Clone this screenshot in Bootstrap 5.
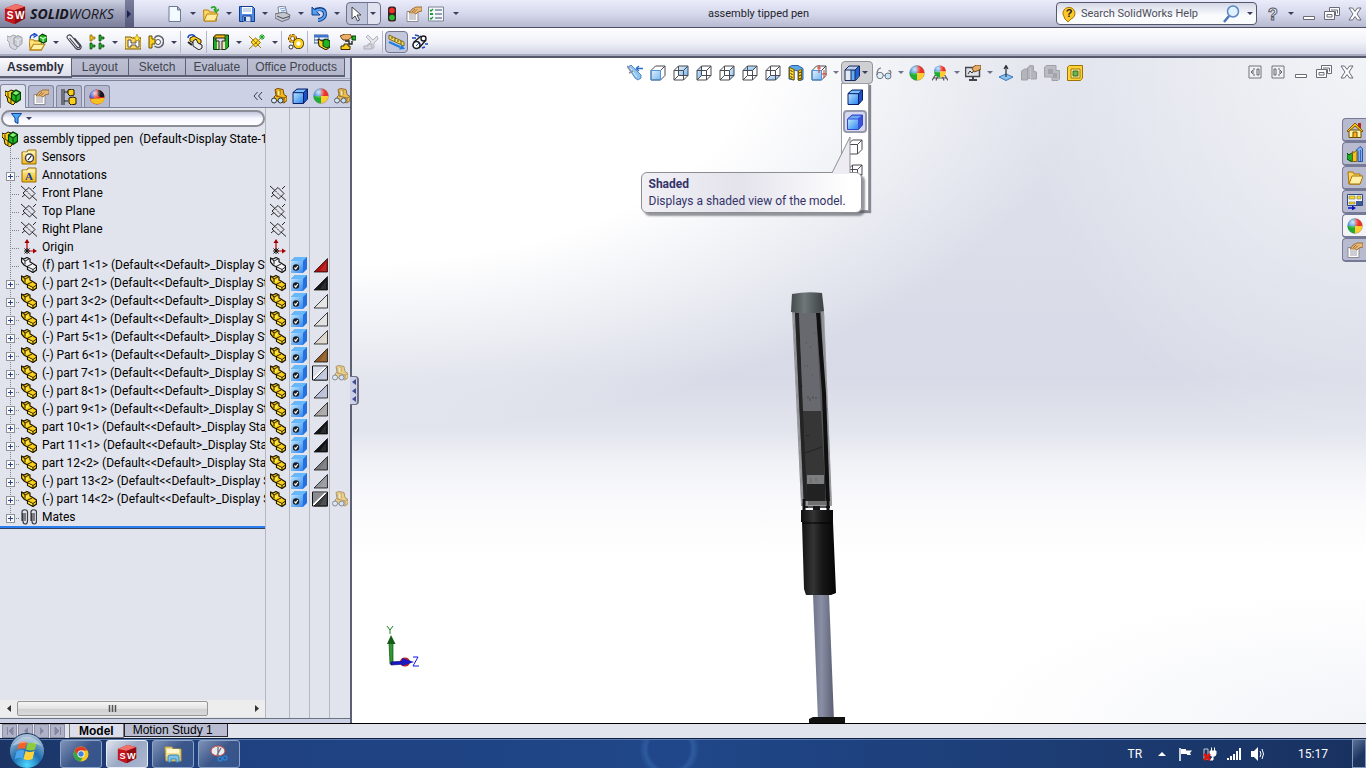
<!DOCTYPE html>
<html lang="en">
<head>
<meta charset="utf-8">
<meta name="viewport" content="width=device-width, initial-scale=1">
<title>SolidWorks - assembly tipped pen</title>
<link href="https://cdn.jsdelivr.net/npm/bootstrap@5.3.0/dist/css/bootstrap.min.css" rel="stylesheet">
<style>
  body { font: 12px/18px Roboto, "Open Sans", sans-serif; color: #000; background: #e1e4ec; }
  button { border: 0; padding: 0; background: none; color: inherit; }
  svg { display: block; flex: none; }
  .ic { width: 16px; height: 16px; }
  .ib { width: 23px; height: 22px; display: inline-flex; align-items: center; justify-content: center; flex: none; }
  .dd { width: 13px; height: 22px; display: inline-flex; align-items: center; justify-content: center; flex: none; }
  .dd::before { content: ""; border: 3px solid transparent; border-top-color: #3a3d5c; border-bottom: 0; }
  .even { flex: 1 1 0; }

  .titlebar { height: 28px; background: linear-gradient(#eaecfb, #d4d7ea 55%, #b6b9d0); border-bottom: 1px solid #4d4f63; }
  .brand { width: 134px; height: 27px; background: linear-gradient(#ccd0e0, #9b9fb8 50%, #7c7f9a); }
  .brand-text { font: italic 14px/27px "Open Sans", sans-serif; color: #17171f; }
  .brand-arrow { width: 9px; background: linear-gradient(#7a7d9b, #565a7c); }
  .brand-arrow::before { content: ""; border: 4px solid transparent; border-left-color: #1d2050; border-right: 0; margin-left: 2px; }
  .titlebar .std .ib { width: 18px; }
  .titlebar .std .dd { width: 18px; }
  .titlebar .std .wide { width: 22px; }
  .title-text { font-size: 11px; color: #23232b; }
  .split { width: 35px; height: 23px; border: 1px solid #6d7089; border-radius: 4px; background: linear-gradient(90deg, #c2c6dc 60%, #8a8da6 60% 63%, #e1e3f0 63%); }
  .titlebar .split .dd { width: 15px; }
  .helpbox { width: 201px; height: 23px; border: 1px solid #55586c; border-radius: 4px; background: linear-gradient(#d5d8e6, #fafbfd 60%); }
  .helpbox input { min-width: 0; border: 0; background: none; font-size: 11px; color: #333; outline: 0; padding: 0; }
  .helpbox input::placeholder { color: #4c4e5a; opacity: 1; }

  .cmdbar { height: 30px; padding-left: 3px; background: linear-gradient(#fdfdff, #f1f2f9 50%, #d3d6e6 92%, #a8abc0 94%); border-bottom: 2px solid #55576b; }
  .sep { width: 3px; height: 22px; border-left: 1px solid #b4b7c9; flex: none; }
  .pressed { background: #c3c7de; border: 1px solid #73768f; border-radius: 4px; }

  .side { flex: 0 0 352px; background: #cdd1e5; border-right: 2px solid #5d5f73; }
  .cmdtabs { font: 12px/18px "Liberation Sans", Arial, sans-serif; border-bottom: 1px solid #a6a9c0; height: 21px; }
  .cmdtabs button { height: 19px; padding: 0 7px; color: #42444f; background: linear-gradient(#bdc0d2, #b3b6ca); border: 1px solid #5d5f73; border-left-width: 0; border-top-color: #8b8ea3; border-bottom-width: 2px; line-height: 15px; }
  .cmdtabs .roomy { padding: 0 10px; }
  .cmdtabs .on { height: 20px; background: linear-gradient(#fbfbfe, #dcdeea); color: #2c2d38; font-weight: bold; border-top: 0; }
  .mgr { height: 28px; border-top: 1px solid #80839b; border-bottom: 1px solid #80839b; margin-top: 1px; }
  .mgr .mt { width: 26px; height: 22px; border: 1px solid #8487a0; border-bottom: 0; border-radius: 3px 3px 0 0; background: #b6bad0; margin-right: 2px; display: flex; align-items: center; justify-content: center; }
  .mgr .mt.on { background: #e1e4ec; height: 24px; margin-bottom: -1px; }
  .heads { gap: 5px; }
  .treearea { background: #e1e4ec; min-height: 0; }
  .tcol { border-right: 1px solid #b5b7bf; flex: none; }
  .filter { height: 17px; border: 2px solid #8b8d97; border-radius: 9px; background: linear-gradient(#c3c6dc, #f6f7ff 50%, #fff); margin: 2px 0 3px 1px; }
  .filter input { min-width: 0; border: 0; background: none; outline: 0; padding: 0; height: 12px; }
  .trow { height: 18px; white-space: nowrap; overflow: hidden; }
  .trow > .ic { margin: 0 5px 0 1px; }
  .rootrow { padding-left: 1px; }
  .trow .stub { width: 20px; height: 18px; flex: none; background:
      repeating-linear-gradient(#80828a 0 1px, transparent 1px 2px) 10px 0 / 1px 100% no-repeat,
      repeating-linear-gradient(90deg, #80828a 0 1px, transparent 1px 2px) 10px 10px / 10px 1px no-repeat; }
  .trow:last-child .stub { background-size: 1px 10px, 10px 1px; }
  .plus { width: 9px; height: 9px; border: 1px solid #8e9098; display: block; margin: 6px 0 0 6px;
      background: linear-gradient(#2c4590, #2c4590) 1px 3px / 5px 1px no-repeat, linear-gradient(#2c4590, #2c4590) 3px 1px / 1px 5px no-repeat, #fafafa; }
  .rollback { height: 3px; background: linear-gradient(#2a7ff0 67%, #34425e 67%); }
  .cells { padding-top: 76px; }
  .cells > div { height: 18px; display: flex; align-items: center; justify-content: center; }
  #c2 > div { justify-content: flex-start; padding-left: 1px; }
  .hscroll { height: 17px; background: #ededee; margin-bottom: 1px; }
  .hscroll .thumb { width: 191px; height: 15px; border: 1px solid #979797; border-radius: 2px; background: linear-gradient(#f5f5f5, #e3e3e4 50%, #cfcfd1 50%, #d9d9da); }
  .arw { width: 17px; height: 17px; display: flex; align-items: center; justify-content: center; }
  .handle { right: -9px; top: 318px; width: 9px; height: 29px; background: #cdd1e5; border: 1px solid #6d7086; border-width: 1px 2px 1px 0; border-radius: 0 4px 4px 0; z-index: 3; }

  .view { min-width: 0; background:
      radial-gradient(ellipse 72% 56% at 0 0, #fff 55%, rgba(255,255,255,0) 100%),
      radial-gradient(ellipse 34% 60% at 100% 0, rgba(255,255,255,.6), rgba(255,255,255,0)),
      radial-gradient(ellipse 40% 20% at 100% 100%, rgba(232,234,242,.5), rgba(232,234,242,0)),
      linear-gradient(#e0e3ec, #d8dbe7 48%, #e2e5ed 56%, #f1f2f7 61%, #fafafc 67%, #fff 75%); }
  .hud { padding-top: 3px; }
  .hud .dd { width: 10px; opacity: .7; }
  .hud .ddb { width: 32px; height: 23px; border: 1px solid #93959b; border-radius: 4px; background: #cfd0d4; }
  .modes { top: 22px; left: 0; width: 28px; height: 128px; background: #fff; border: 1px solid #9a9ca6; box-shadow: 2px 2px 1px #85878f; z-index: 4; padding-top: 1px; }
  .modes button { width: 24px; height: 23px; margin: 0 1px 2px; display: flex; align-items: center; justify-content: center; }
  .modes .hot { border: 2px solid #9799ac; border-radius: 4px; background: #d5d8f0; }
  .tip { top: 111px; left: -200px; width: 221px; height: 41px; background: linear-gradient(90deg, #f0f0f5, #e4e3ec 45%, #fff 95%); border: 1px solid #8d8e94; border-radius: 6px; box-shadow: 3px 3px 2px rgba(80,82,90,.6); color: #343368; z-index: 5; padding: 3px 7px; line-height: 17px; text-align: left; }
  .tip svg { left: 190px; top: -37px; }
  .pane { top: 60px; z-index: 2; }
  .pane button { width: 24px; height: 24px; border: 1px solid #767a96; border-right: 0; border-bottom-width: 2px; border-radius: 4px 0 0 4px; background: #b8bbcf; display: flex; align-items: center; justify-content: center; }
  .pane .on { background: #f3f4f8; }
  .pen { left: 43%; }
  .triad { left: 32px; bottom: 52px; }
  .modeltabs { height: 15px; padding-left: 2px; font: 12px/14px "Liberation Sans", Arial, sans-serif; background: #e1e4ec; border-top: 1px solid #000; }
  .modeltabs .nv { width: 15px; height: 14px; border: 1px solid #8d90a5; background: #b0b3c7; margin-right: 1px; display: flex; align-items: center; justify-content: center; }
  .modeltabs .mtab { height: 13px; padding: 0 14px 0 8px; border: 1px solid #26272f; border-top: 0; background: #b9bcd0; line-height: 12px; }
  .modeltabs .mtab.on { background: #dcdeec; font-weight: bold; height: 14px; border-color: #777; padding: 0 9px; margin-left: 3px; }

  .taskbar { height: 30px; color: #fff; border-top: 1px solid #0e1f3f; box-shadow: inset 0 1px #5a7cb0; background:
      radial-gradient(circle at 49% 10px, rgba(70,130,200,0) 20px, rgba(70,130,200,.35) 24px, rgba(70,130,200,0) 30px),
      linear-gradient(90deg, #1b3464, #1f4180 16%, #204789 50%, #1c3b72 80%, #18315f); }
  .orb { left: 8px; top: -6px; }
  .apps { margin-left: 60px; }
  .app { width: 42px; height: 28px; border: 1px solid #8ea3c8; border-radius: 3px; background: linear-gradient(135deg, #7f93b8, #3b5689 50%, #34548e); display: flex; align-items: center; justify-content: center; }
  .app.on { background: linear-gradient(135deg, #dfe4ed, #9aa8c4 50%, #aab8d2); border-color: #e8edf6; }
  .app svg { width: 20px; height: 20px; }
  .showdesk { width: 14px; height: 29px; border: 1px solid #8497b9; background: linear-gradient(135deg, #5c7299, #1c3460 60%); }
</style>
</head>
<body class="vh-100 d-flex flex-column overflow-hidden">

<svg width="0" height="0" class="position-absolute" aria-hidden="true">
  <defs>
    <linearGradient id="gb" x1="0" y1="0" x2="1" y2="1"><stop offset="0" stop-color="#b9e4ff"/><stop offset="1" stop-color="#2f86ee"/></linearGradient>
    <linearGradient id="gl" x1="0" y1="0" x2="1" y2="1"><stop offset="0" stop-color="#e2f1ff"/><stop offset="1" stop-color="#79b7ee"/></linearGradient>
    <linearGradient id="gy" x1="0" y1="0" x2="0" y2="1"><stop offset="0" stop-color="#fff3a0"/><stop offset="1" stop-color="#f0b51c"/></linearGradient>
    <radialGradient id="shine" cx=".35" cy=".25" r=".7"><stop offset="0" stop-color="#fff" stop-opacity=".8"/><stop offset=".6" stop-color="#fff" stop-opacity="0"/></radialGradient>
  </defs>
  <!-- part shapes -->
  <symbol id="part" viewBox="0 0 16 16"><path d="M.500 1l2.500 1 3-1.500 3 1.500v3l2 1 4.500 3v4l-3.500 2.500-5.500-3v-2.500l-3.500-2-2.500-3z" fill="#f9cf1b" stroke="#1d1500" stroke-width="1.200"/><path d="M1 1.500l3 2.500v3.500M4 4l4-2M6 9.500l5-2.500M6 9.500l6 3v3M12 12.500l3.500-2.500" fill="none" stroke="#2b1f00"/><path d="M5 5.500l2.500-1.300v2L5 7.500zM7 10.800l4 2v1.200l-4-2z" fill="#fff04a"/></symbol>
  <symbol id="partw" viewBox="0 0 16 16"><path d="M.500 1l2.500 1 3-1.500 3 1.500v3l2 1 4.500 3v4l-3.500 2.500-5.500-3v-2.500l-3.500-2-2.500-3z" fill="#f4f4f6" stroke="#111" stroke-width="1.200"/><path d="M1 1.500l3 2.500v3.500M4 4l4-2M6 9.500l5-2.500M6 9.500l6 3v3M12 12.500l3.500-2.500" fill="none" stroke="#222"/></symbol>
  <symbol id="asm" viewBox="0 0 16 16"><path d="M0 2l3 1 3-2 3 1v3l-2 2v3l3 2v2l-2 2-5-3-1-5-2-2z" fill="#f9cf1b" stroke="#1d1500"/><path d="M3 4v4l3 2v4" fill="none" stroke="#4a3500"/><path d="M6.500 4l4.500-3 4.500 2.500v7L11 13.500l-4.500-3z" fill="#22b324" stroke="#063a06" stroke-width="1.200"/><path d="M7 4.500l4 2.500v6M11 7l4.500-3" fill="none" stroke="#063a06"/><path d="M8 4.200l3-2 3 1.500-3 2z" fill="#8ff07c"/></symbol>
  <symbol id="asmg" viewBox="0 0 16 16"><path d="M0 2l3 1 3-2 3 1v3l-2 2v3l3 2v2l-2 2-5-3-1-5-2-2z" fill="#d6d8de" stroke="#a5a7b0"/><path d="M7 4l4-2.500 4 2v6L11 13l-4-2.500z" fill="#c9cbd2" stroke="#9b9da6"/><path d="M8 5l3 1.500v5M11 6.500l3.500-2" fill="none" stroke="#eee"/></symbol>
  <symbol id="openasm" viewBox="0 0 16 16"><path d="M0 6h4l1 1h6v8H1z" fill="#ffe37c" stroke="#b8820e"/><path d="M1 15l3-5h10l-3 5z" fill="#fff0a8" stroke="#b8820e"/><path d="M9 3l3-2 4 2v4l-3 2-4-2z" fill="#22b324" stroke="#063a06"/><path d="M9.500 3.500l3 1.500v3M12.500 5L15.500 3.500" stroke="#c8ffc0" fill="none"/><path d="M1 5c0-3 2-4 4-3M4 0l3 2-3 2" fill="none" stroke="#1648c8" stroke-width="1.300"/></symbol>
  <symbol id="plane" viewBox="0 0 16 16"><path d="M8 2.500l6 6-5.500 5.500-6.500-6zM0 1l5 4.500M11 11l5 4.500M1 12l3-2.500M12 4l3-3" fill="none" stroke="#111" stroke-width=".9"/><path d="M5.500 6l5 5" stroke="#222" stroke-dasharray="2 1"/></symbol>
  <symbol id="origin" viewBox="0 0 16 16"><path d="M6 12V3M6 12h7" stroke="#c00000" stroke-width="1.200"/><path d="M6 0l2.500 4h-5zM16 12l-4-2.500v5z" fill="#a00000"/><path d="M3.500 9.500l5 5m0-5l-5 5M3 12h6M6 9v6" stroke="#111"/></symbol>
  <symbol id="fold" viewBox="0 0 16 16"><path d="M1 3h5l1-2h8v14H1z" fill="url(#gy)" stroke="#9a6c05"/><path d="M2 4h12" stroke="#fff9cf"/></symbol>
  <symbol id="sensor" viewBox="0 0 16 16"><use href="#fold"/><circle cx="8.500" cy="9" r="4" fill="#fff" stroke="#3d3f4c" stroke-width="1.400"/><path d="M7 11l3.500-4.500" stroke="#111" stroke-width="1.200"/></symbol>
  <symbol id="mates" viewBox="0 0 16 16"><path d="M2 4v8c0 4 4.500 4 4.500 0V3C6.500 0 1 0 1 3v9M4 4v8M11 4v8c0 4 4.500 4 4.500 0V3c0-3-5.500-3-5.500 0v9M13 4v8" fill="none" stroke="#3a3a3e" stroke-width="1.200"/></symbol>
  <!-- cubes -->
  <symbol id="cube" viewBox="0 0 16 16"><path d="M1 4.500L5 1h10.500v10l-4 4.500H1z" fill="#3d80ea"/><path d="M1 5h10v10H1z" fill="url(#gb)"/><path d="M1.500 4.500L5 1.500h9.500l-3.500 3z" fill="#7cc0fa"/><path d="M11.500 5L15 1.500v9.500l-3.500 4z" fill="#1d50c4"/><path d="M1 4.500L5 1h10.500v10l-4 4.500H1zM1 4.700h10.500M11.500 4.700v10.800M11.500 4.700L15.500 1" fill="none" stroke="#0a1f66"/></symbol>
  <symbol id="cubes" viewBox="0 0 16 16"><path d="M.500 5l4.500-4h10.500v10l-4 4.500H.500z" fill="#3a52da"/><path d="M1 5.500h10v9.500H1z" fill="url(#gb)"/><path d="M1.500 4.500l3.500-3h9.500l-3.500 3z" fill="#6aa8f6"/><path d="M.500 5l4.500-4h10.500v10l-4 4.500H.500z" fill="none" stroke="#3348c4"/></symbol>
  <symbol id="cubec" viewBox="0 0 16 16"><path d="M0 4l4-4h12v12l-4 4H0z" fill="#2470e0"/><path d="M0 4h12v12H0z" fill="url(#gb)"/><path d="M0 4l4-4h12l-4 4z" fill="#66b8fb"/><circle cx="5" cy="10.500" r="3.200" fill="#1b1b1f"/><path d="M3.500 10.500l1.300 1.500 2-3" fill="none" stroke="#fff" stroke-width="1.200"/></symbol>
  <symbol id="wire" viewBox="0 0 16 16"><path d="M1 5.500h9.500v9.500H1zM5.500 1H15v9.500M1 5.500L5.500 1M10.500 5.500L15 1M10.500 15L15 10.500" fill="none" stroke="#4a4b52"/></symbol>
  <symbol id="wireh" viewBox="0 0 16 16"><use href="#wire"/><path d="M5.500 1v9.500H15M5.500 10.500L1 15" fill="none" stroke="#4a4b52"/></symbol>
  <symbol id="vfront" viewBox="0 0 16 16"><path d="M1 5.500h9.500v9.500H1z" fill="url(#gl)"/><use href="#wire"/><path d="M1 5.500h9.500v9.500H1z" fill="none" stroke="#4b96dc"/></symbol>
  <symbol id="vback" viewBox="0 0 16 16"><path d="M5.500 1H15v9.500H5.500z" fill="url(#gl)"/><use href="#wireh"/></symbol>
  <symbol id="vleft" viewBox="0 0 16 16"><path d="M1 5.500L5.500 1v9.500L1 15z" fill="url(#gl)"/><use href="#wireh"/></symbol>
  <symbol id="vright" viewBox="0 0 16 16"><path d="M10.500 5.500L15 1v9.500L10.500 15z" fill="url(#gl)"/><use href="#wireh"/></symbol>
  <symbol id="vtop" viewBox="0 0 16 16"><path d="M1 5.500L5.500 1H15l-4.500 4.500z" fill="url(#gl)"/><use href="#wireh"/></symbol>
  <symbol id="vbot" viewBox="0 0 16 16"><path d="M1 15l4.500-4.500H15L10.500 15z" fill="url(#gl)"/><use href="#wireh"/></symbol>
  <symbol id="vori" viewBox="0 0 16 16"><use href="#vfront"/><path d="M8 0v8M6 3h4M13 5v8M11 9h5" stroke="#d43a2c"/></symbol>
  <symbol id="sect" viewBox="0 0 16 16"><path d="M1 2l3-1.500h6l5 3v11l-3 1-2-.500V6L6 5v10l-5-1z" fill="#5fa6e8" stroke="#2b63a8"/><path d="M1.500 2.500L6 4.500v10.500l-4.500-2zM10.500 5.500l3-1v10l-3 1z" fill="#ffd932" stroke="#7d5c00"/><path d="M2.500 5l2 2M2.500 8l2 2M2.500 11l2 2M11 8l2-1M11 11l2-1M11 14l2-1" stroke="#3a2b00"/></symbol>
  <symbol id="dstyle" viewBox="0 0 16 16"><path d="M1 5h6v10H1z" fill="#e4e8f2"/><path d="M7 5h4l4-4v10l-4 4.500H7z" fill="#2261d4"/><path d="M7 5.500h4v9.500H7z" fill="#5fb0f8"/><path d="M1 5l4-4h10l-4 4z" fill="#b9cdee"/><path d="M1 5l4-4h10.500v10l-4 4.500H1zM1 5h10v10M11 5l4-4M7 5v10" fill="none" stroke="#1a2a58"/></symbol>
  <!-- spheres and cars -->
  <symbol id="ball" viewBox="0 0 16 16"><path d="M8 8V.500A7.500 7.500 0 0 0 .500 8z" fill="#2f86e0"/><path d="M8 8V.500A7.500 7.500 0 0 1 15.500 8z" fill="#e8332a"/><path d="M8 8H.500A7.500 7.500 0 0 0 8 15.500z" fill="#1fae35"/><path d="M8 8h7.500A7.500 7.500 0 0 1 8 15.500z" fill="#ffcc2e"/><circle cx="8" cy="8" r="7.500" fill="url(#shine)" stroke="#666" stroke-opacity=".3"/></symbol>
  <symbol id="dman" viewBox="0 0 16 16"><circle cx="8" cy="8" r="7.500" fill="#e2261f"/><path d="M.500 8C.500 4 4 .500 8 .500c-3 2-4 5-3 9-2 0-4-.500-4.500-1.500z" fill="#3550c8"/><path d="M1 9.500c3 1 4 0 7 0s5-1 7.500 0A7.500 7.500 0 0 1 1 9.500z" fill="#f4c320"/><path d="M9 1a7 7 0 0 1 6.500 6.500C13 9 9 8 8.500 5z" fill="#17171c"/><circle cx="8" cy="8" r="7.500" fill="url(#shine)"/></symbol>
  <symbol id="scene" viewBox="0 0 16 16"><path d="M0 15.500l3-5h10l3 5M4 15.500l1.500-4M12 15.500l-1.500-4M2 13h12" fill="none" stroke="#555" stroke-width="1.200"/><path d="M8 6.500V.500a6 6 0 0 0-6 6z" fill="#2f86e0"/><path d="M8 6.500V.500a6 6 0 0 1 6 6z" fill="#e8332a"/><path d="M8 6.500H2a6 6 0 0 0 6 6z" fill="#1fae35"/><path d="M8 6.500h6a6 6 0 0 1-6 6z" fill="#ffcc2e"/><circle cx="8" cy="6.500" r="6" fill="url(#shine)"/></symbol>
  <symbol id="hide" viewBox="0 0 16 16"><path d="M4 1.500l3-1 5 1 1 5 3 2v4l-3 2.500-9-3-1-3 2-2z" fill="#f2b91d" stroke="#7b4a00"/><path d="M6 3v5M9 2v5M5 8l8 2M13 10l3-1.500M13 10v4" fill="none" stroke="#8c5200"/><path d="M6.500 3h2v4h-2z" fill="#fff09a"/><circle cx="3" cy="12.500" r="2.500" fill="#d7ecff" stroke="#333"/><circle cx="9.500" cy="12.500" r="2.500" fill="#bfe0ff" stroke="#333"/></symbol>
  <symbol id="glasses" viewBox="0 0 16 16"><circle cx="4" cy="10.500" r="3.200" fill="#dff0fb" stroke="#70757c"/><circle cx="12" cy="11" r="3" fill="#c7e3f7" stroke="#70757c"/><path d="M7 10l2 .500M1 10c0-4 1-7 4-7M14.500 9c1-2 0-4-2-3" fill="none" stroke="#70757c" stroke-width="1.200"/></symbol>
  <!-- standard toolbar -->
  <symbol id="new" viewBox="0 0 16 16"><path d="M2 .500h8.500l3 3.500v11.500H2z" fill="#f3faff" stroke="#6d7a92"/><path d="M10.500.500V4h3z" fill="#b4c6dc" stroke="#6d7a92"/></symbol>
  <symbol id="open" viewBox="0 0 16 16"><path d="M.500 4h5l1 2h7v9H1z" fill="#ffd766" stroke="#b8820e"/><path d="M1 15l3-7h11l-3 7z" fill="#ffeb9c" stroke="#b8820e"/><path d="M8 2c3-2 5-1 5 2M11 3l2 3 3-3" fill="none" stroke="#2aa72a" stroke-width="1.700"/></symbol>
  <symbol id="save" viewBox="0 0 16 16"><path d="M.500.500h13l2 2v13H.500z" fill="#4f8be0" stroke="#123a8c"/><path d="M3 1h10v7H3z" fill="#fff"/><path d="M4 3h8M4 5h8" stroke="#8fb0da"/><path d="M4 10h8v6H4z" fill="#d9e6f6" stroke="#123a8c"/><path d="M6 11v4" stroke="#123a8c" stroke-width="2"/></symbol>
  <symbol id="print" viewBox="0 0 16 16"><path d="M3 1l7-1 2 7-8 2z" fill="#f4f9ff" stroke="#7c8496"/><path d="M0 8l9-2 6 3-1 4-7 2.500L0 12z" fill="#c3c6cf" stroke="#686b78"/><path d="M2 10l6 2.500 6-2" fill="none" stroke="#484a58"/><path d="M5 3l5-1M6 5l5-1" stroke="#78a4d8"/></symbol>
  <symbol id="undo" viewBox="0 0 16 16"><path d="M2 6c6-5 12-3 12 2 0 4-4 6-7 6" fill="none" stroke="#14408e" stroke-width="4"/><path d="M1 1v8h8z" fill="#4e9bf0" stroke="#14408e"/><path d="M3 6c5-4 11-3 11 2 0 4-4 6-7 6" fill="none" stroke="#5ba6f4" stroke-width="2"/></symbol>
  <symbol id="cursor" viewBox="0 0 16 16"><path d="M4 1v12l3-3 2.500 5 2-1-2.500-5h4z" fill="#fff" stroke="#44464f"/></symbol>
  <symbol id="traffic" viewBox="0 0 16 16"><rect x="4" y=".500" width="8" height="15" rx="2.500" fill="#3a2222"/><circle cx="8" cy="4.500" r="2.800" fill="#f03328"/><circle cx="8" cy="11.500" r="2.800" fill="#27c035"/></symbol>
  <symbol id="props" viewBox="0 0 16 16"><path d="M1 5.500h11v10H1z" fill="#fff" stroke="#8a8a94"/><path d="M3 9h7M3 11h7M3 13h7" stroke="#9a9aa6"/><path d="M3 7l3-4 4-2h6v4l-4 1-2 2-2-1z" fill="#e8b878" stroke="#8d5a22" stroke-width=".8"/><path d="M6 6l3-3M8 6.500l3-3" stroke="#8d5a22" stroke-width=".8"/></symbol>
  <symbol id="opts" viewBox="0 0 16 16"><path d="M.500 1h15v14H.500z" fill="#f4f7fb" stroke="#7a8698"/><path d="M7 4h7M7 8h7M7 12h7" stroke="#7a8698" stroke-width="1.500"/><path d="M2 4l1 1 2-2M2 12l1 1 2-2" fill="none" stroke="#1d9a2a" stroke-width="1.300"/><path d="M2 7h3v2H2z" fill="#1d9a2a"/></symbol>
  <!-- command bar -->
  <symbol id="clip" viewBox="0 0 16 16"><path d="M3.500 4l7.500 9c1.500 1.500 3.500.500 2.500-1.500L5.500 2C3-.500 0 2 1.500 4.500l8.500 10c3 2.500 6.500 0 4.500-3.500L8.500 4" fill="none" stroke="#3a3b42" stroke-width="1.100"/></symbol>
  <symbol id="pattern" viewBox="0 0 16 16"><g stroke-width=".7"><path d="M1 1h2v2h3v2H3v2H1z" fill="#f4c51a" stroke="#7d5c00"/><path d="M10 1h2v2h3v2h-3v2h-2z" fill="#22b324" stroke="#063a06"/><path d="M1 9h2v2h3v2H3v2H1zM10 9h2v2h3v2h-3v2h-2z" fill="#22b324" stroke="#063a06"/></g></symbol>
  <symbol id="smart" viewBox="0 0 16 16"><path d="M0 3h6l1 1h9v11H0z" fill="#ffd55e" stroke="#7d5c00"/><path d="M3 6h3v3h5V6h3v7h-3v-2H6v2H3z" fill="#fff" stroke="#555"/><path d="M12 0l1 3 3 .500-2.500 1.500.500 3-2-2-2 2 .500-3L8 3.500l3-.500z" fill="#ffea3a" stroke="#9a6c05" stroke-width=".5"/></symbol>
  <symbol id="move" viewBox="0 0 16 16"><path d="M1 2h3v3h3v5H4v4H1z" fill="#f9cf1b" stroke="#6b4d00"/><path d="M6.500 4c3-4 9-2 9 3.500s-5 7.500-9 4.500" fill="none" stroke="#60636e" stroke-width="1.500"/><circle cx="10" cy="8" r="2.500" fill="#fff" stroke="#555"/></symbol>
  <symbol id="showh" viewBox="0 0 16 16"><path d="M3 4l4-2 7 4v3l-4 2-7-4z" fill="#f9cf1b" stroke="#3a2800"/><path d="M1 4c0-4 6-4 7-1" fill="none" stroke="#1648c8" stroke-width="1.500"/><path d="M6 7l3-2 2 4 4 2v3l-3 2-6-4z" fill="#e8e9ee" stroke="#222"/><path d="M1 8l4 3" stroke="#222" stroke-width="2"/></symbol>
  <symbol id="feat" viewBox="0 0 16 16"><path d="M.500 3l3-2h12v12l-3 2.500H.500z" fill="#1faa2a" stroke="#063a06"/><path d="M2 1h10v4H2z" fill="#f6b91c" stroke="#5f4200"/><path d="M4 7h8v8H4z" fill="#f6e2b0"/><path d="M3 4h9v3H9v9H6V7H3z" fill="#d9dbe0" stroke="#222"/></symbol>
  <symbol id="refg" viewBox="0 0 16 16"><path d="M2 8l4.500-4 5 4.500-5 4.500z" fill="#ffdc2a" stroke="#8f6a00"/><path d="M0 2l12 12M0 15L13 3" stroke="#a57c00"/><path d="M13 0v6M10 3h6M11 1l4 4M15 1l-4 4" stroke="#15a020"/><path d="M6 8h2v2H6z" fill="#a57c00"/></symbol>
  <symbol id="gears" viewBox="0 0 16 16"><circle cx="4.500" cy="4.500" r="3" fill="none" stroke="#3a2800" stroke-width="3" stroke-dasharray="2 .700"/><circle cx="4.500" cy="4.500" r="3" fill="none" stroke="#f9b21b" stroke-width="1.500"/><circle cx="10.500" cy="9.500" r="3.500" fill="#fff" stroke="#3a2800" stroke-width="4"/><circle cx="10.500" cy="9.500" r="3.500" fill="#fff" stroke="#f9cf1b" stroke-width="2.600"/><circle cx="3" cy="13" r="2" fill="#fff" stroke="#333"/></symbol>
  <symbol id="bom" viewBox="0 0 16 16"><path d="M0 1h14v8H0z" fill="#eef2fa" stroke="#3c5a9a"/><path d="M0 1h14v2.500H0z" fill="#3f74cc"/><path d="M0 6h14M5 3v6" stroke="#3c5a9a"/><path d="M4 5l4 2 3-2 5 2v6l-4 3-7-4z" fill="#f9cf1b" stroke="#1d1500"/><path d="M9 7l3-2 4 2v5l-3 2-4-2z" fill="#22b324" stroke="#063a06"/></symbol>
  <symbol id="expl" viewBox="0 0 16 16"><path d="M0 2l5-2h5l2 3-4 3H3z" fill="#e8b06a" stroke="#6f3e0c"/><path d="M12 2h4v4h-4z" fill="#22b324" stroke="#063a06"/><path d="M5 7h4v3h3v-3" fill="none" stroke="#222" stroke-width="1.400"/><path d="M1 12h3v-2h4v2h2v3.500H1z" fill="#f9cf1b" stroke="#3a2800"/></symbol>
  <symbol id="explg" viewBox="0 0 16 16"><path d="M3 3l2-2 5 5 4-4 1 3-4 4v5H5v-3l3-3z" fill="#e2e3e8" stroke="#b5b6bf"/><path d="M1 12h4v-2h4v5H1z" fill="#d5d6dd" stroke="#abacb6"/></symbol>
  <symbol id="instant" viewBox="0 0 18 16"><path d="M1 1l15 7v4L1 5z" fill="#f6dd60" stroke="#7b6a20"/><path d="M4 3v2M7 4v3M10 6v2M13 7v3" stroke="#5c4d10"/><path d="M1 8l11 5" stroke="#1c7fe0" stroke-width="2"/><path d="M17 15l-6 .500 2.500-5z" fill="#1c7fe0"/></symbol>
  <symbol id="belt" viewBox="0 0 16 16"><circle cx="4.500" cy="11" r="3.500" fill="#fff" stroke="#1b1c24" stroke-width="1.600"/><circle cx="11.500" cy="4.500" r="2.500" fill="#fff" stroke="#1b1c24" stroke-width="1.400"/><path d="M1.500 8.500L9 2M7 14l7-8" stroke="#1b1c24" stroke-width="1.400"/><path d="M0 4h4M3 1l4 1M10 14l3-1M13 10h3" stroke="#1a49b8" stroke-width="1.400"/><path d="M4 12l3-3" stroke="#1a49b8"/></symbol>
  <!-- heads-up extras -->
  <symbol id="zoomsel" viewBox="0 0 16 16"><path d="M1 2l3-2 10 10v3l-3 2-3-2z" fill="#8fc4f0" stroke="#3272b8" stroke-width=".8"/><path d="M3 3l7 9" stroke="#fff" stroke-opacity=".7"/><path d="M0 1l5 7M2 8l4-2" stroke="#8a93a2" stroke-width="1.400"/><path d="M9 3.500h7M9 3.500l3-2.500M9 3.500L12 6" stroke="#2b6cc4" fill="none" stroke-width="1.300"/></symbol>
  <symbol id="vset" viewBox="0 0 16 16"><path d="M.500 2.500h14v9H.500z" fill="#dfe1e6" stroke="#44464e" stroke-width="1.500"/><path d="M4 15h8M8 12v3" stroke="#44464e" stroke-width="2"/><path d="M3 9l2-3 2 2 3-4" fill="none" stroke="#333"/><path d="M7 3l4-3h5v4l-4 2-3 1z" fill="#e3ae68" stroke="#7d4a12"/></symbol>
  <symbol id="normal" viewBox="0 0 16 16"><path d="M8 9l7 3-7 3.500L1 12z" fill="#8cc2f0" stroke="#3978b8"/><path d="M8 12V1M6 4l2-3.500L10 4" fill="none" stroke="#2c2d34" stroke-width="1.200"/></symbol>
  <symbol id="gr1" viewBox="0 0 16 16"><path d="M.500 6l3-2h3v11h-6zM6.500 3l3-3 3 1v5l3 1v7h-5l-4-1z" fill="#b4b5ba" stroke="#a0a1a8"/><path d="M9.500 3v11" stroke="#c8c9ce"/></symbol>
  <symbol id="gr2" viewBox="0 0 16 16"><path d="M.500 2l2-1.500H12v5h3.500V14L14 15.500H8V12H.500z" fill="#bbbcc1" stroke="#a0a1a8"/><path d="M4 4h5v5H4zM9 8h4v5H9z" fill="#a3a4ab"/></symbol>
  <symbol id="doc3" viewBox="0 0 16 16"><path d="M.500 2l2-1.500h13V13l-2 2.500H.500z" fill="#ffd23a" stroke="#a07400"/><path d="M4 4h9v9H4z" fill="#fff2a0" stroke="#a07400"/><path d="M6 6h5v5H6z" fill="#6cb54c" stroke="#3a6b28"/></symbol>
  <symbol id="wmin" viewBox="0 0 16 16"><path d="M2.500 10.500h11v3h-11z" fill="#fff" stroke="#696b78"/></symbol>
  <symbol id="wres" viewBox="0 0 16 16"><path d="M5.500 1.500h10v8h-4v-4h-6z" fill="#fff" stroke="#696b78"/><path d="M7 4h6.500v3.500" fill="none" stroke="#696b78"/><path d="M.500 5.500h10v8H.500zM3 8.500h5v2.500H3z" fill="#fff" stroke="#696b78"/></symbol>
  <symbol id="wx" viewBox="0 0 16 16"><path d="M2 2h3.500L8 5.500 10.500 2H14L10 8l4 6h-3.500L8 10.500 5.500 14H2l4-6z" fill="#fff" stroke="#696b78"/></symbol>
  <symbol id="wl" viewBox="0 0 16 16"><path d="M2 2h12v12H2z" fill="#f1f1f4" stroke="#73757f"/><path d="M4 8l2-2v4zM10 5h2v6h-2zM6 5h2M6 11h2" fill="none" stroke="#63656f"/></symbol>
  <symbol id="wr" viewBox="0 0 16 16"><path d="M2 2h12v12H2z" fill="#f1f1f4" stroke="#73757f"/><path d="M12 8l-2-2v4zM4 5h2v6H4zM8 5h2M8 11h2" fill="none" stroke="#63656f"/></symbol>
  <!-- task pane -->
  <symbol id="home" viewBox="0 0 16 16"><path d="M11 1h3v5h-3z" fill="#b22a1c"/><path d="M2 8h12v7.500H2z" fill="#fff3b0" stroke="#6b4d00"/><path d="M0 9l8-8 8 8-1 1-7-6-7 6z" fill="#f6c11c" stroke="#8c5c00"/><path d="M6 10h4v5.500H6z" fill="#ffb70f" stroke="#7a4d00"/></symbol>
  <symbol id="lib" viewBox="0 0 16 16"><path d="M0 7l2 2 2.500-2 1 1v7.500L3 15l-3-2z" fill="#1faa2a" stroke="#064f0a"/><path d="M5.500 5.500l1.500 1L10 4v11.500H5.500z" fill="#f6c11c" stroke="#6b4d00" stroke-width=".8"/><path d="M9.500 4l1.500 1.500V15.500h4.500V2.500L13 .500z" fill="#7fb0f4" stroke="#123a8c" stroke-width=".8"/><path d="M13.500 4v11" stroke="#3566c0"/></symbol>
  <symbol id="fopen" viewBox="0 0 16 16"><path d="M1 2h5l1 2h6v10H2z" fill="#ffd766" stroke="#a97400"/><path d="M2 14L5 6h11l-3 8z" fill="#fff0a6" stroke="#a97400"/></symbol>
  <symbol id="vpal" viewBox="0 0 16 16"><path d="M.500.500h15v11H.500z" fill="#f4f6fa" stroke="#2d4a7a"/><path d="M2 2h6v3H2zM10 2h4v3h-4zM2 8h6v2H2z" fill="#ffe01a" stroke="#555" stroke-width=".5"/><path d="M9 7h6v4H9z" fill="#3c5a9a"/><path d="M1 14h6" stroke="#0a12c8" stroke-width="1.500"/><path d="M5 11.500l4 2.500-4 2.500z" fill="#0a12c8"/></symbol>
  <symbol id="redcube" viewBox="0 0 24 22"><path d="M1 5L13 0l10 3v13L11 22 1 18z" fill="#c3161c"/><path d="M1 5l12-5 10 3-11 4z" fill="#f0716a"/><path d="M12 7l11-4v13l-11 6z" fill="#8f0c12"/></symbol>
</svg>

<header class="titlebar d-flex align-items-center flex-shrink-0">
  <div class="brand d-flex align-items-center flex-shrink-0">
    <svg class="ms-1 me-1" width="22" height="22" viewBox="0 0 24 22"><use href="#redcube" width="24" height="22"/><text x="3" y="17" font-family="Liberation Sans" font-weight="bold" font-size="11" fill="#fff">S</text><text x="12" y="17" font-family="Liberation Sans" font-weight="bold" font-size="11" fill="#fff">W</text></svg>
    <span class="brand-text flex-grow-1"><b>SOLID</b>WORKS</span>
    <button class="brand-arrow h-100 d-flex align-items-center" aria-label="Show menu"></button>
  </div>
  <div class="std d-flex align-items-center flex-shrink-0 ps-4 ms-2">
    <button class="ib" aria-label="New"><svg class="ic"><use href="#new"/></svg></button><button class="dd" aria-label="New options"></button>
    <button class="ib" aria-label="Open"><svg class="ic"><use href="#open"/></svg></button><button class="dd" aria-label="Open options"></button>
    <button class="ib" aria-label="Save"><svg class="ic"><use href="#save"/></svg></button><button class="dd" aria-label="Save options"></button>
    <button class="ib" aria-label="Print"><svg class="ic"><use href="#print"/></svg></button><button class="dd" aria-label="Print options"></button>
    <button class="ib" aria-label="Undo"><svg class="ic"><use href="#undo"/></svg></button><button class="dd" aria-label="Undo options"></button>
    <div class="split d-flex align-items-center"><button class="ib" aria-label="Select"><svg class="ic"><use href="#cursor"/></svg></button><button class="dd" aria-label="Select options"></button></div>
    <button class="ib wide" aria-label="Rebuild"><svg class="ic"><use href="#traffic"/></svg></button>
    <button class="ib wide" aria-label="File properties"><svg class="ic"><use href="#props"/></svg></button>
    <button class="ib wide" aria-label="Options"><svg class="ic"><use href="#opts"/></svg></button><button class="dd" aria-label="More options"></button>
  </div>
  <div class="title-text flex-grow-1 text-center text-nowrap pe-1">assembly tipped pen</div>
  <div class="helpbox d-flex align-items-center flex-shrink-0 ps-1">
    <svg width="16" height="16" viewBox="0 0 16 16"><path d="M4 13L2 8a6 6 0 1 1 8 5l-3 3z" fill="#ffc928" stroke="#a97400"/><text x="8" y="11" text-anchor="middle" font-family="Liberation Sans" font-size="11" font-weight="bold" fill="#222">?</text></svg>
    <input class="flex-grow-1 ms-1" type="text" placeholder="Search SolidWorks Help" aria-label="Search SolidWorks Help">
    <button class="ib" aria-label="Search"><svg width="18" height="18" viewBox="0 0 18 18"><path d="M1 17l5-6" stroke="#4a78b4" stroke-width="2.500"/><circle cx="10" cy="6.500" r="5.500" fill="#dff0ff" stroke="#5a88be" stroke-width="1.500"/></svg></button>
    <button class="dd" aria-label="Search options"></button>
  </div>
  <div class="d-flex align-items-center flex-shrink-0 ms-1">
    <button class="ib" aria-label="Help"><svg class="ic" viewBox="0 0 16 16"><text x="8" y="14" text-anchor="middle" font-family="Liberation Sans" font-size="16" font-weight="bold" fill="#fff" stroke="#55576a">?</text></svg></button>
    <button class="dd" aria-label="Help options"></button>
    <button class="ib" aria-label="Minimize"><svg class="ic"><use href="#wmin"/></svg></button>
    <button class="ib" aria-label="Restore"><svg class="ic"><use href="#wres"/></svg></button>
    <button class="ib" aria-label="Close"><svg class="ic"><use href="#wx"/></svg></button>
  </div>
</header>

<nav class="cmdbar d-flex align-items-center flex-shrink-0" aria-label="Assembly toolbar">
  <button class="ib" aria-label="Edit component"><svg class="ic"><use href="#asmg"/></svg></button>
  <button class="ib" aria-label="Insert components"><svg width="18" height="18"><use href="#openasm"/></svg></button><button class="dd" aria-label="Insert options"></button>
  <button class="ib" aria-label="Mate"><svg class="ic"><use href="#clip"/></svg></button>
  <button class="ib" aria-label="Linear pattern"><svg class="ic"><use href="#pattern"/></svg></button><button class="dd" aria-label="Pattern options"></button>
  <button class="ib" aria-label="Smart fasteners"><svg class="ic"><use href="#smart"/></svg></button>
  <button class="ib" aria-label="Move component"><svg class="ic"><use href="#move"/></svg></button><button class="dd" aria-label="Move options"></button>
  <span class="sep"></span>
  <button class="ib" aria-label="Show hidden components"><svg class="ic"><use href="#showh"/></svg></button>
  <span class="sep"></span>
  <button class="ib" aria-label="Assembly features"><svg class="ic"><use href="#feat"/></svg></button><button class="dd" aria-label="Feature options"></button>
  <button class="ib" aria-label="Reference geometry"><svg class="ic"><use href="#refg"/></svg></button><button class="dd" aria-label="Geometry options"></button>
  <span class="sep"></span>
  <button class="ib" aria-label="New motion study"><svg class="ic"><use href="#gears"/></svg></button>
  <span class="sep"></span>
  <button class="ib" aria-label="Bill of materials"><svg class="ic"><use href="#bom"/></svg></button>
  <span class="sep border-0"></span>
  <button class="ib" aria-label="Exploded view"><svg class="ic"><use href="#expl"/></svg></button>
  <button class="ib" aria-label="Explode line sketch"><svg class="ic"><use href="#explg"/></svg></button>
  <span class="sep"></span>
  <button class="ib pressed" aria-label="Instant3D"><svg width="18" height="16"><use href="#instant"/></svg></button>
  <button class="ib" aria-label="Belt"><svg class="ic"><use href="#belt"/></svg></button>
</nav>

<main class="d-flex flex-grow-1 overflow-hidden">
  <aside class="side d-flex flex-column position-relative">
    <div class="cmdtabs d-flex flex-shrink-0">
      <button class="on">Assembly</button><button class="roomy">Layout</button><button class="roomy">Sketch</button><button>Evaluate</button><button>Office Products</button>
    </div>
    <div class="mgr d-flex align-items-end flex-shrink-0">
      <button class="mt on" aria-label="Feature tree"><svg class="ic"><use href="#asm"/></svg></button>
      <button class="mt" aria-label="Property manager"><svg class="ic"><use href="#props"/></svg></button>
      <button class="mt" aria-label="Configuration manager"><svg class="ic" viewBox="0 0 16 16"><path d="M1 0v16M3 0v16M3 3h4M3 12h4" stroke="#222"/><path d="M7 1l4-1 2 1v5l-4 1-2-2z" fill="#f9cf1b" stroke="#1d1500"/><path d="M8 9l4-1 3 1v6l-5 1-2-2z" fill="#f9cf1b" stroke="#1d1500"/></svg></button>
      <button class="mt" aria-label="Display manager"><svg class="ic"><use href="#dman"/></svg></button>
      <button class="ms-auto me-2 pt-1 align-self-center" aria-label="Collapse"><svg width="10" height="8" viewBox="0 0 10 8"><path d="M4.500 0L1 4l3.500 4M9 0L5.500 4 9 8" fill="none" stroke="#3c3d49"/></svg></button>
      <div class="heads d-flex align-self-center pt-1">
        <svg class="ic"><use href="#hide"/></svg><svg class="ic"><use href="#cube"/></svg><svg class="ic"><use href="#ball"/></svg><svg class="ic opacity-75"><use href="#hide"/></svg>
      </div>
    </div>
    <div class="treearea d-flex flex-grow-1">
      <div class="tcol d-flex flex-column overflow-hidden" style="width:266px">
        <div class="filter d-flex align-items-center ps-1 flex-shrink-0">
          <svg class="ms-1" width="11" height="11" viewBox="0 0 11 11"><path d="M.500.500h10L7 5v5.500L4 9V5z" fill="#48a9f4" stroke="#113f9a"/></svg>
          <span class="dd h-100"></span>
          <input class="flex-grow-1" type="text" aria-label="Filter tree">
        </div>
        <div id="tree"></div>
        <div class="rollback flex-shrink-0"></div>
        <div class="hscroll d-flex align-items-center mt-auto flex-shrink-0">
          <button class="arw" aria-label="Scroll left"><svg width="4" height="7" viewBox="0 0 4 7"><path d="M4 0v7L0 3.500z" fill="#333"/></svg></button>
          <div class="thumb d-flex align-items-center justify-content-center"><svg width="9" height="7" viewBox="0 0 9 7"><path d="M1.500 0v7M4.500 0v7M7.500 0v7" stroke="#555" stroke-width="1.500"/></svg></div>
          <button class="arw ms-auto" aria-label="Scroll right"><svg width="4" height="7" viewBox="0 0 4 7"><path d="M0 0v7l4-3.500z" fill="#333"/></svg></button>
        </div>
      </div>
      <div class="tcol cells" id="c1" style="width:24px"></div>
      <div class="tcol cells" id="c2" style="width:20px"></div>
      <div class="tcol cells" id="c3" style="width:20px"></div>
      <div class="cells flex-grow-1" id="c4"></div>
    </div>
    <div class="border-top border-secondary flex-shrink-0 pt-1"></div>
    <button class="handle position-absolute d-flex flex-column align-items-center justify-content-evenly" aria-label="Collapse panel">
      <svg width="4" height="6" viewBox="0 0 4 6"><path d="M4 0v6L0 3z" fill="#434a94"/></svg><svg width="4" height="6" viewBox="0 0 4 6"><path d="M4 0v6L0 3z" fill="#434a94"/></svg><svg width="4" height="6" viewBox="0 0 4 6"><path d="M4 0v6L0 3z" fill="#434a94"/></svg>
    </button>
  </aside>

  <section class="view flex-grow-1 position-relative overflow-hidden">
    <div class="hud d-flex align-items-start">
      <div class="even"></div>
      <div class="d-flex align-items-center">
        <button class="ib" aria-label="Zoom to fit"><svg class="ic"><use href="#zoomsel"/></svg></button>
        <button class="ib" aria-label="Front"><svg class="ic"><use href="#vfront"/></svg></button>
        <button class="ib" aria-label="Back"><svg class="ic"><use href="#vback"/></svg></button>
        <button class="ib" aria-label="Left"><svg class="ic"><use href="#vleft"/></svg></button>
        <button class="ib" aria-label="Right"><svg class="ic"><use href="#vright"/></svg></button>
        <button class="ib" aria-label="Top"><svg class="ic"><use href="#vtop"/></svg></button>
        <button class="ib" aria-label="Bottom"><svg class="ic"><use href="#vbot"/></svg></button>
        <button class="ib" aria-label="Section view"><svg class="ic"><use href="#sect"/></svg></button>
        <button class="ib" aria-label="View orientation"><svg class="ic"><use href="#vori"/></svg></button><button class="dd" aria-label="Orientation options"></button>
        <div class="position-relative">
          <button class="ddb d-flex align-items-center justify-content-center" aria-label="Display style"><svg class="ic"><use href="#dstyle"/></svg><span class="dd opacity-100"></span></button>
          <div class="modes position-absolute">
            <button aria-label="Shaded with edges"><svg class="ic"><use href="#cube"/></svg></button>
            <button class="hot" aria-label="Shaded"><svg class="ic"><use href="#cubes"/></svg></button>
            <button aria-label="Hidden lines removed"><svg class="ic"><use href="#wire"/></svg></button>
            <button aria-label="Hidden lines visible"><svg class="ic"><use href="#wireh"/></svg></button>
          </div>
          <div class="tip position-absolute text-nowrap" role="tooltip">
            <svg class="position-absolute" width="20" height="38" viewBox="0 0 20 38"><path d="M0 37L18 1v36" fill="#ececf2"/><path d="M0 37L18 1v36" fill="none" stroke="#8d8e94"/><path d="M1 37.500h16" stroke="#ececf2" stroke-width="2"/></svg>
            <b>Shaded</b><br>Displays a shaded view of the model.
          </div>
        </div>
        <button class="ib" aria-label="Hide/show items"><svg class="ic"><use href="#glasses"/></svg></button><button class="dd" aria-label="Item options"></button>
        <button class="ib" aria-label="Edit appearance"><svg class="ic"><use href="#ball"/></svg></button>
        <button class="ib" aria-label="Apply scene"><svg class="ic"><use href="#scene"/></svg></button><button class="dd" aria-label="Scene options"></button>
        <button class="ib" aria-label="View settings"><svg class="ic"><use href="#vset"/></svg></button><button class="dd" aria-label="Setting options"></button>
        <button class="ib" aria-label="Normal to"><svg class="ic"><use href="#normal"/></svg></button>
        <button class="ib" aria-label="Assembly visualization"><svg class="ic"><use href="#gr1"/></svg></button>
        <button class="ib" aria-label="Isolate"><svg class="ic"><use href="#gr2"/></svg></button>
        <button class="ib" aria-label="3D drawing view"><svg class="ic"><use href="#doc3"/></svg></button>
      </div>
      <div class="even d-flex justify-content-end pe-2">
        <button class="ib" aria-label="Tile left"><svg class="ic"><use href="#wl"/></svg></button>
        <button class="ib" aria-label="Tile right"><svg class="ic"><use href="#wr"/></svg></button>
        <button class="ib" aria-label="Minimize document"><svg class="ic"><use href="#wmin"/></svg></button>
        <button class="ib" aria-label="Restore document"><svg class="ic"><use href="#wres"/></svg></button>
        <button class="ib" aria-label="Close document"><svg class="ic"><use href="#wx"/></svg></button>
      </div>
    </div>

    <div class="pane position-absolute end-0 d-flex flex-column">
      <button aria-label="Resources"><svg class="ic"><use href="#home"/></svg></button>
      <button aria-label="Design library"><svg class="ic"><use href="#lib"/></svg></button>
      <button aria-label="File explorer"><svg class="ic"><use href="#fopen"/></svg></button>
      <button aria-label="View palette"><svg class="ic"><use href="#vpal"/></svg></button>
      <button class="on" aria-label="Appearances"><svg class="ic"><use href="#ball"/></svg></button>
      <button aria-label="Custom properties"><svg class="ic"><use href="#props"/></svg></button>
    </div>

    <!-- the modelled pen -->
    <svg class="pen position-absolute bottom-0" width="60" height="432" viewBox="0 0 60 432" role="img" aria-label="Pen model">
      <defs>
        <linearGradient id="cap"><stop offset="0" stop-color="#454b4c"/><stop offset=".4" stop-color="#6f7778"/><stop offset="1" stop-color="#3b4041"/></linearGradient>
        <linearGradient id="grip"><stop offset="0" stop-color="#101010"/><stop offset=".35" stop-color="#343434"/><stop offset=".6" stop-color="#181818"/><stop offset="1" stop-color="#050505"/></linearGradient>
        <linearGradient id="rod"><stop offset="0" stop-color="#70748a"/><stop offset=".4" stop-color="#8a8fa5"/><stop offset="1" stop-color="#5c5f72"/></linearGradient>
      </defs>
      <path d="M4 20L36 20 44 214H13z" fill="#8f9095"/>
      <path d="M7 21l26 0 9 196H16z" fill="#55565b"/>
      <path d="M7 22h4l9 195h-4z" fill="#242424"/>
      <path d="M28 22h4l6 80 4 115h-4l-4-115z" fill="#101010"/>
      <path d="M11 22h17l5 98H15z" fill="#68696f"/>
      <path d="M15 120h18l5 87H19z" fill="#363636"/>
      <path d="M17 162l17-6M18 145l3-1M30 186h4" stroke="#242424"/>
      <path d="M20 105v3M22 107v3M25 105v3M28 106v2M16 75h1M19 75h1M14 95h1M22 56h1M18 52h1M24 84h1M26 42h1" fill="none" stroke="#4a4b50"/>
      <path d="M19 184h17v9H19z" fill="#7c7d7f"/><path d="M23 187v5M28 187v3" stroke="#666"/>
      <path d="M19 193h18v17H19z" fill="#222"/>
      <path d="M13 210h31v5H13z" fill="#9a9a9c"/><path d="M20 210h18v4H20z" fill="#6f6f70"/>
      <path d="M16 208v12M40 208v12" stroke="#111" stroke-width="3"/><path d="M25 215h7v5h-7z" fill="#151515"/>
      <path d="M5 24l9 188M36 24l7 188" stroke="#a8a9ac" stroke-dasharray="9 5" opacity=".6"/>
      <path d="M4 3Q19 0 34 2L36 20Q20 24 3 21z" fill="url(#cap)"/>
      <path d="M25 303h16l5 127H30z" fill="url(#rod)"/>
      <path d="M13 219h32v12l3 71-5 2H18l-2-6-2-67h-1z" fill="url(#grip)"/><path d="M15 232h29" stroke="#000"/>
      <path d="M21 428l4-2h32v6H21z" fill="#101010"/>
    </svg>

    <svg class="triad position-absolute" width="40" height="46" viewBox="0 0 40 46" role="img" aria-label="Axis triad">
      <path d="M3 1l3 4v4M9 1L6 5" fill="none" stroke="#17831b"/>
      <path d="M5 17h4v22H6z" fill="#2d9a33" stroke="#0b4a0e" stroke-width=".7"/><path d="M7 10l4.500 9h-8.500z" fill="#145c18"/>
      <ellipse cx="21" cy="37" rx="5" ry="4.500" fill="#c22020"/><path d="M7 37l14-1v3l-14 1z" fill="#1818c8" stroke="#0b0b66" stroke-width=".7"/><path d="M18 33l12 4-12 4z" fill="#1a1ac0"/>
      <path d="M29 32h5l-5 9h6" fill="none" stroke="#1414e8"/>
    </svg>
  </section>
</main>

<div class="modeltabs d-flex flex-shrink-0 align-items-start">
  <button class="nv" aria-label="First"><svg width="8" height="8" viewBox="0 0 8 8"><path d="M1.500 0v8M7 0v8L3 4z" fill="#8387a4" stroke="#8387a4"/></svg></button>
  <button class="nv" aria-label="Previous"><svg width="8" height="8" viewBox="0 0 8 8"><path d="M6 0v8L2 4z" fill="#8387a4"/></svg></button>
  <button class="nv" aria-label="Next"><svg width="8" height="8" viewBox="0 0 8 8"><path d="M2 0v8l4-4z" fill="#8387a4"/></svg></button>
  <button class="nv" aria-label="Last"><svg width="8" height="8" viewBox="0 0 8 8"><path d="M6.500 0v8M1 0v8l4-4z" fill="#8387a4" stroke="#8387a4"/></svg></button>
  <button class="mtab on">Model</button><button class="mtab">Motion Study 1</button>
</div>

<footer class="taskbar d-flex flex-shrink-0 align-items-center position-relative">
  <button class="orb position-absolute" aria-label="Start">
    <svg width="38" height="36" viewBox="0 0 38 36">
      <defs><radialGradient id="orbg" cx=".5" cy=".9" r=".9"><stop offset="0" stop-color="#4fd8ff"/><stop offset=".45" stop-color="#1e6db0"/><stop offset="1" stop-color="#b5c6d8"/></radialGradient></defs>
      <circle cx="19" cy="18" r="17.500" fill="url(#orbg)" stroke="#17355e"/>
      <path d="M11 10q4-3 8-1l-2 7q-4-2-8 1z" fill="#f0642a"/><path d="M20 9.500q4 2 9-1l-2 8q-5 2-9 0z" fill="#8ccb3c"/><path d="M8.500 18.500q4-3 8-1l-2 8q-4-2-8 1z" fill="#4aa5ee"/><path d="M17.500 18q4 2 9 0l-2 8q-5 2-9 0z" fill="#ffd13b"/>
      <path d="M4 13Q19-6 34 13 19 6 4 13z" fill="#fff" opacity=".35"/>
    </svg>
  </button>
  <div class="apps d-flex gap-1 flex-shrink-0">
    <button class="app" aria-label="Chrome"><svg viewBox="0 0 20 20"><circle cx="10" cy="10" r="7.500" fill="#f5c721"/><path d="M3.500 6.500a7.500 7.500 0 0 1 13 0H10a3.500 3.500 0 0 0-3 5.200z" fill="#df3b2b"/><path d="M3.500 6.200l3.500 5.500a3.500 3.500 0 0 0 4.500 1.800l-2 4a7.500 7.500 0 0 1-6-11.300z" fill="#35a548"/><circle cx="10" cy="10" r="3.500" fill="#fff"/><circle cx="10" cy="10" r="2.700" fill="#3f7fe0"/></svg></button>
    <button class="app on" aria-label="SolidWorks"><svg viewBox="0 0 24 22"><use href="#redcube" width="24" height="22"/><text x="3" y="17" font-family="Liberation Sans" font-weight="bold" font-size="11" fill="#fff">S</text><text x="12" y="17" font-family="Liberation Sans" font-weight="bold" font-size="11" fill="#fff">W</text></svg></button>
    <button class="app" aria-label="Explorer"><svg viewBox="0 0 20 20"><path d="M2 3h7l1 2h8v12H3z" fill="#f2df8c" stroke="#b99a3c"/><path d="M4 5h12v4H4z" fill="#fff8cf"/><path d="M5 18v-5q0-2 2-2h7q2 0 2 2v5h-3v-3H8v3z" fill="#7cc1ea" stroke="#3f86b8"/></svg></button>
    <button class="app" aria-label="Snipping tool"><svg viewBox="0 0 20 20"><ellipse cx="9" cy="7" rx="7" ry="5" fill="#e9e9ee" stroke="#c8453a"/><path d="M9 3v9M12 4L8 11" stroke="#6b6d78" stroke-width="1.300"/><circle cx="11" cy="15" r="2" fill="none" stroke="#2b7fd0" stroke-width="1.500"/><circle cx="16" cy="14" r="2" fill="none" stroke="#2b7fd0" stroke-width="1.500"/></svg></button>
  </div>
  <div class="ms-auto d-flex align-items-center">
    <span class="me-3">TR</span>
    <svg class="me-2" width="8" height="4" viewBox="0 0 8 4"><path d="M4 0l4 4H0z" fill="#fff"/></svg>
    <svg class="ic mx-1" viewBox="0 0 16 16"><path d="M2 2v13" stroke="#fff" stroke-width="1.500"/><path d="M3 3h5v1.500h6l-2 2.500 1 2H9V8H3z" fill="#fff"/></svg>
    <svg class="ic mx-1" viewBox="0 0 16 16"><path d="M8 5h6v3l-1 2h-4L8 8zM9.500 1.500v4M12.500 1.500v4M11 10v4H8" fill="#fff" stroke="#fff"/><path d="M2 3h4v10H2z" fill="none" stroke="#ccc"/><path d="M2 8l6 6M8 8l-6 6" stroke="#e3160f" stroke-width="2.500"/></svg>
    <svg class="ic mx-1" viewBox="0 0 16 16"><path d="M1 14h2v-2H1zM4 14h2v-4H4zM7 14h2V8H7zM10 14h2V5h-2zM13 14h2V2h-2z" fill="#fff"/></svg>
    <svg class="ic mx-1" viewBox="0 0 16 16"><path d="M1 5h3l4-4v14l-4-4H1z" fill="#fff"/><path d="M10 5q2 3 0 6M12 3q3 5 0 10" fill="none" stroke="#fff"/></svg>
    <time class="mx-4 ps-1">15:17</time>
    <button class="showdesk" aria-label="Show desktop"></button>
  </div>
</footer>

<script>
  const D = ' (Default<<Default>_Display State-1>)';
  // icon, label, expandable, swatch colour, transparent
  const rows = [
    ['sensor', 'Sensors'], ['note', 'Annotations', 1], ['plane', 'Front Plane'], ['plane', 'Top Plane'], ['plane', 'Right Plane'], ['origin', 'Origin'],
    ['partw', '(f) part 1<1>' + D, 0, '#b30d0d'], ['part', '(-) part 2<1>' + D, 1, '#15161a'], ['part', '(-) part 3<2>' + D, 1, '#e4e4e4'],
    ['part', '(-) part 4<1>' + D, 1, '#dfe0e0'], ['part', '(-) Part 5<1>' + D, 1, '#ddd5cc'], ['part', '(-) Part 6<1>' + D, 1, '#8f5a26'],
    ['part', '(-) part 7<1>' + D, 1, '#c0c6da', 1], ['part', '(-) part 8<1>' + D, 1, '#b9bfd6'], ['part', '(-) part 9<1>' + D, 1, '#a8a5a4'],
    ['part', 'part 10<1>' + D, 1, '#141518'], ['part', 'Part 11<1>' + D, 1, '#101114'], ['part', 'part 12<2>' + D, 1, '#77787c'],
    ['part', '(-) part 13<2>' + D, 1, '#94979c'], ['part', '(-) part 14<2>' + D, 1, '#3c3e42', 1], ['mates', 'Mates', 1]
  ];
  const esc = s => s.replace(/</g, '&lt;').replace(/>/g, '&gt;');
  const use = id => id === 'note'
    ? '<svg class="ic" viewBox="0 0 16 16"><use href="#fold"/><text x="8" y="13" font-family="Liberation Serif" font-weight="bold" font-size="11" text-anchor="middle" fill="#113a9a">A</text></svg>'
    : `<svg class="ic"><use href="#${id}"/></svg>`;
  let tree = `<div class="trow rootrow d-flex align-items-center"><svg class="ic"><use href="#asm"/></svg>assembly tipped pen&nbsp; (Default&lt;Display State-1&gt;)</div>`;
  let c1 = '', c2 = '', c3 = '', c4 = '';
  for (const [icon, label, exp, col, clear] of rows) {
    tree += `<div class="trow d-flex align-items-center"><span class="stub">${exp ? '<button class="plus" aria-label="Expand"></button>' : ''}</span>${use(icon)}<span>${esc(label)}</span></div>`;
    if (icon === 'sensor' || icon === 'note') continue;
    c1 += `<div>${icon === 'mates' ? '' : use(icon)}</div>`;
    c2 += `<div>${col ? use('cubec') : ''}</div>`;
    c3 += `<div>${col ? `<svg class="ic" viewBox="0 0 16 16">${clear ? `<path d="M.500 1h15v14H.500z" fill="#fff" stroke="#111"/><path d="M1 1.500h12L1 13z" fill="${col}" opacity=".6"/>` : ''}<path d="M2 15L15.500 1.500V15z" fill="${col}" stroke="#111" stroke-width=".8"/><path d="M14 5v9H8z" fill="#fff" opacity=".1"/></svg>` : ''}</div>`;
    c4 += `<div>${clear ? '<svg class="ic opacity-50"><use href="#hide"/></svg>' : ''}</div>`;
  }
  document.getElementById('tree').innerHTML = tree;
  document.getElementById('c1').innerHTML = c1;
  document.getElementById('c2').innerHTML = c2;
  document.getElementById('c3').innerHTML = c3;
  document.getElementById('c4').innerHTML = c4;
</script>
<script src="https://cdn.jsdelivr.net/npm/bootstrap@5.3.0/dist/js/bootstrap.bundle.min.js"></script>
</body>
</html>
